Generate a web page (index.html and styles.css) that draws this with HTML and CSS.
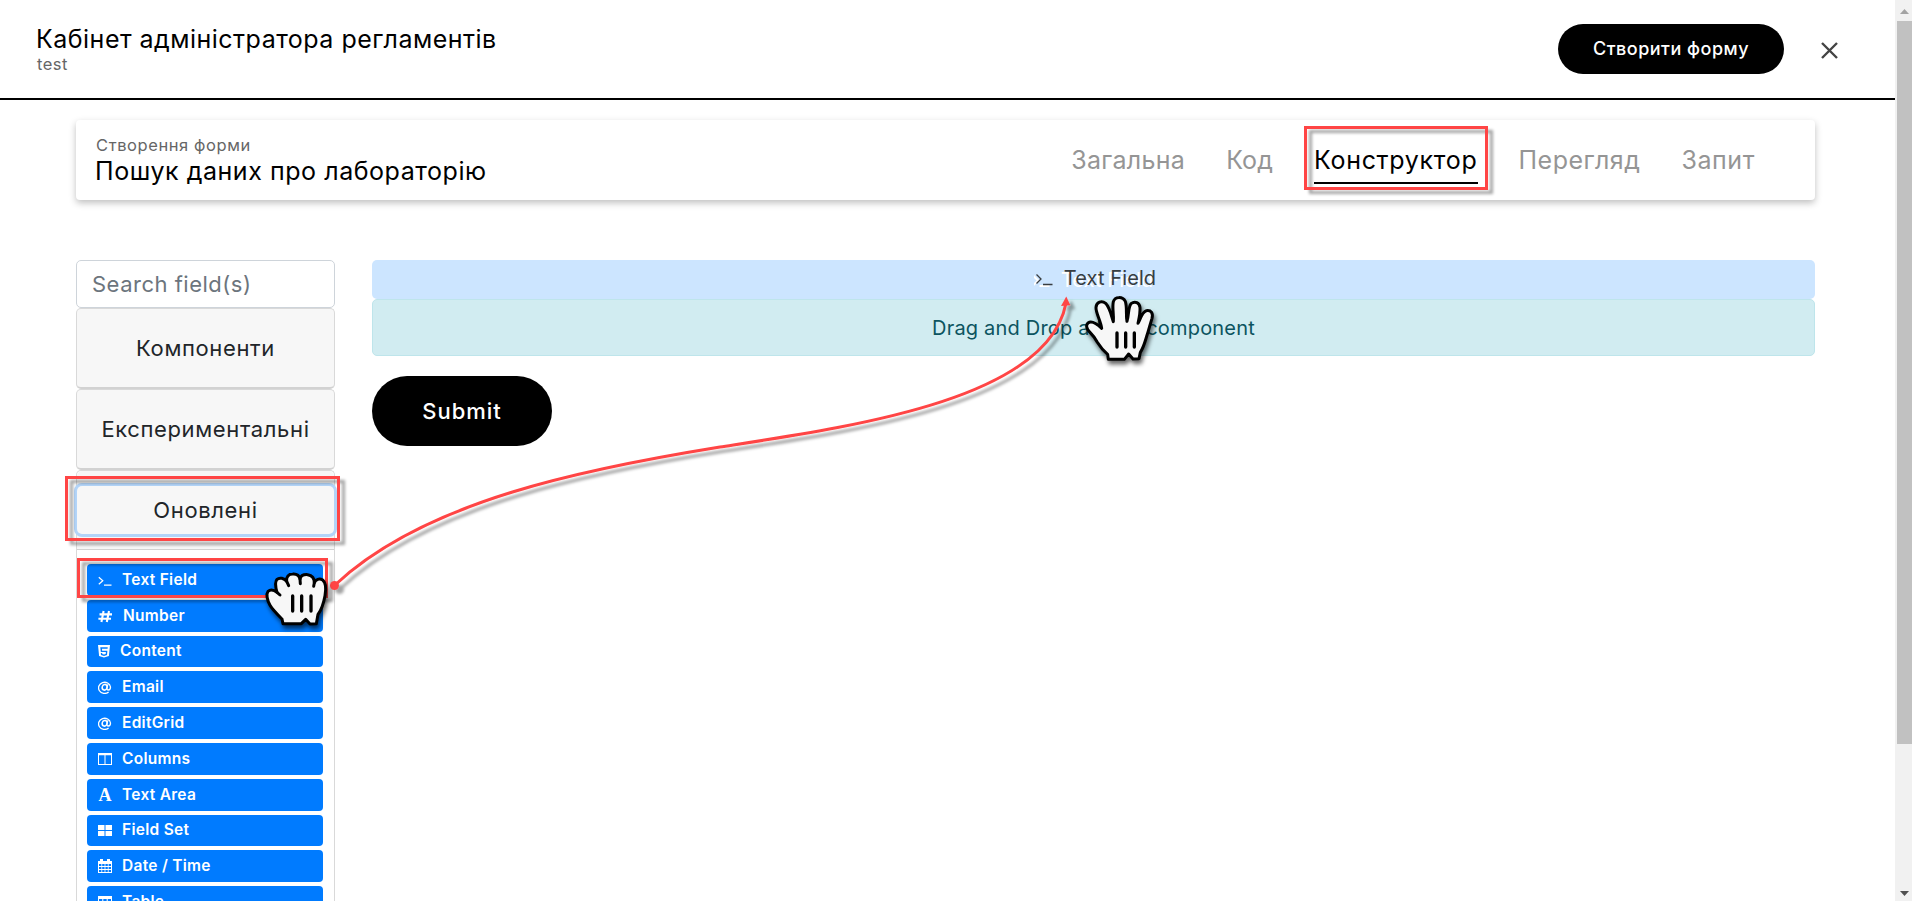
FILE: index.html
```
<!DOCTYPE html>
<html lang="uk">
<head>
<meta charset="utf-8">
<title>Кабінет адміністратора регламентів</title>
<link rel="stylesheet" href="styles.css">
</head>
<body>
<div class="window">
  <div class="page">
    <header class="top">
      <div class="top-titles">
        <div class="top-title">Кабінет адміністратора регламентів</div>
        <div class="top-user">test</div>
      </div>
      <button class="create">Створити форму</button>
      <svg class="close" width="17" height="17" viewBox="0 0 17 17"><path d="M1 1L16 16M16 1L1 16" stroke="#444" stroke-width="2.4"/></svg>
    </header>

    <section class="form-card">
      <div class="form-titles">
        <div class="form-sub">Створення форми</div>
        <div class="form-title">Пошук даних про лабораторію</div>
      </div>
      <nav class="tabs">
        <a class="tab t1">Загальна</a>
        <a class="tab t2">Код</a>
        <a class="tab t3 active">Конструктор</a>
        <a class="tab t4">Перегляд</a>
        <a class="tab t5">Запит</a>
      </nav>
    </section>

    <main class="builder">
      <aside class="sidebar">
        <input class="search" placeholder="Search field(s)">
        <div class="group"><button class="group-btn">Компоненти</button></div>
        <div class="group"><button class="group-btn">Експериментальні</button></div>
        <div class="group open">
          <div class="group-head"><button class="group-btn focus">Оновлені</button></div>
          <div class="items">
            <div class="item"><svg class="icon" viewBox="0 0 14 14"><path d="M.8 4.2L4.8 7.7L.8 11.2M6 12.2H13.5" fill="none" stroke="#fff" stroke-width="1.2"/></svg>Text Field</div>
            <div class="item wide"><svg class="icon" viewBox="0 0 14 14"><path d="M5.6 2L3.4 13M11 2L8.8 13M1.5 5.4H14M.4 9.7H13" fill="none" stroke="#fff" stroke-width="2.1"/></svg>Number</div>
            <div class="item narrow"><svg class="icon" viewBox="0 0 14 14"><path fill="#fff" fill-rule="evenodd" d="M0 1H12L10.9 12L6 13.6L1.1 12ZM2.3 3.3L2.8 8H7.9L7.7 10L6 10.5L4.3 10L4.2 9H2.8L3 11L6 12L9 11L9.4 6.7H4.1L4 4.8H9.6L9.7 3.3Z"/></svg>Content</div>
            <div class="item"><svg class="icon" viewBox="0 0 14 14"><g fill="none" stroke="#fff" stroke-width="1.3"><path d="M10.6 12A6 5.6 0 1 1 12.5 7C12.5 9.5 11.2 10 10.3 10C9.2 10 8.8 9.2 9 8.4L9.8 4.4"/><ellipse cx="6.6" cy="7.3" rx="2.4" ry="2.8" transform="rotate(15 6.6 7.3)" stroke-width="1.5"/></g></svg>Email</div>
            <div class="item"><svg class="icon" viewBox="0 0 14 14"><g fill="none" stroke="#fff" stroke-width="1.3"><path d="M10.6 12A6 5.6 0 1 1 12.5 7C12.5 9.5 11.2 10 10.3 10C9.2 10 8.8 9.2 9 8.4L9.8 4.4"/><ellipse cx="6.6" cy="7.3" rx="2.4" ry="2.8" transform="rotate(15 6.6 7.3)" stroke-width="1.5"/></g></svg>EditGrid</div>
            <div class="item"><svg class="icon" viewBox="0 0 14 14"><path fill="#fff" fill-rule="evenodd" d="M0 1H14V13H0ZM1 3.2V12H6.5V3.2ZM7.5 3.2V12H13V3.2Z"/></svg>Columns</div>
            <div class="item"><span class="icon letter">A</span>Text Area</div>
            <div class="item"><svg class="icon" viewBox="0 0 14 14"><path fill="#fff" d="M0 2H6.5V7H0ZM7.5 2H14V7H7.5ZM0 8H6.5V13H0ZM7.5 8H14V13H7.5Z"/></svg>Field Set</div>
            <div class="item"><svg class="icon" viewBox="0 0 14 14"><path fill="#fff" fill-rule="evenodd" d="M0 2H2V0H5V2H9V0H12V2H14V14H0ZM1 5V7H3.4V5ZM4.2 5V7H6.6V5ZM7.4 5V7H9.8V5ZM10.6 5V7H13V5ZM1 8V10H3.4V8ZM4.2 8V10H6.6V8ZM7.4 8V10H9.8V8ZM10.6 8V10H13V8ZM1 11V13H3.4V11ZM4.2 11V13H6.6V11ZM7.4 11V13H9.8V11ZM10.6 11V13H13V11Z"/></svg>Date / Time</div>
            <div class="item"><svg class="icon" viewBox="0 0 14 14"><path fill="#fff" fill-rule="evenodd" d="M0 1H14V13H0ZM1 4V6H4.3V4ZM5.3 4V6H8.7V4ZM9.7 4V6H13V4ZM1 7V9H4.3V7ZM5.3 7V9H8.7V7ZM9.7 7V9H13V7ZM1 10V12H4.3V10ZM5.3 10V12H8.7V10ZM9.7 10V12H13V10Z"/></svg>Table</div>
          </div>
        </div>
      </aside>
      <div class="canvas">
        <div class="dragged"><svg class="prompt" width="19" height="15" viewBox="0 0 19 15"><path d="M1 4L5.500 8.500L1 13M7 14H17" transform="translate(-1.500 0)" fill="none" stroke="#fff" stroke-width="2"/><path d="M2.500 2.500L7 7L2.500 11.500M9 12.500H18.500" fill="none" stroke="#383d41" stroke-width="1.300"/></svg><span>Text Field</span></div>
        <div class="drop">Drag and Drop a form component</div>
        <button class="submit">Submit</button>
      </div>
    </main>
  </div>
  <div class="scroll">
    <svg class="arrow" width="17" height="21" viewBox="0 0 17 21"><path d="M5 14L9.500 9L14 14Z" fill="#a3a3a3"/></svg>
    <div class="thumb"></div>
    <svg class="arrow" width="17" height="17" viewBox="0 0 17 17"><path d="M5 7L9.500 12L14 7Z" fill="#505050"/></svg>
  </div>
</div>

<svg class="notes" width="1912" height="901" viewBox="0 0 1912 901">
  <defs>
    <filter id="sh" x="-10%" y="-20%" width="130%" height="150%"><feDropShadow dx="5" dy="4" stdDeviation="1.8" flood-color="#000" flood-opacity=".36"/></filter>
    <filter id="hs" x="-20%" y="-20%" width="150%" height="150%"><feDropShadow dx="5" dy="11" stdDeviation="6" flood-color="#000" flood-opacity=".6"/></filter>
  </defs>
  <g fill="none" stroke="#ff4545" stroke-width="3">
    <rect x="1305.500" y="127.500" width="181" height="61" filter="url(#sh)"/>
    <rect x="66.500" y="477.500" width="272" height="62" filter="url(#sh)"/>
    <rect x="78.500" y="559.500" width="248" height="37" filter="url(#sh)"/>
  </g>
  <g filter="url(#sh)">
    <path d="M335 585C425 500 590 468 720 447C850 427 1048 400 1066 303" fill="none" stroke="#ff4545" stroke-width="3"/>
    <circle cx="334.500" cy="585.500" r="4.500" fill="#ff4545"/>
    <path d="M1066.300 296.500L1061 306L1070.300 305.300Z" fill="#ff4545"/>
  </g>
  <g transform="translate(250 550) scale(.33333)" filter="url(#hs)">
    <path d="M99 221L96 207C84 195 68 180 60 166C51 150 48 132 54 124C61 118 72 120 81 127C76 109 75 94 81 88C89 81 102 85 110 94C108 80 116 72 128 72C141 71 148 78 150 87C153 76 161 73 173 74C186 76 193 86 193 98C197 88 208 84 218 90C230 99 228 119 225 137C221 159 216 177 204 193L199 221L180 222L167 208L154 221Z" fill="#f7f7f7" stroke="#000" stroke-width="9" stroke-linejoin="round"/>
    <path d="M81 127L90 135M110 94L116 107M150 87L151 101M193 98L191 109" fill="none" stroke="#000" stroke-width="9" stroke-linecap="round"/>
    <path d="M128 138V183M155 138V183M183 138V183" stroke="#000" stroke-width="10" stroke-linecap="round"/>
  </g>
  <g transform="translate(1060 280) scale(.33333)" filter="url(#hs)">
    <path d="M145 238L143 223C132 214 120 200 112 187C105 174 99 166 88 155C79 145 77 135 84 129C94 122 108 129 125 145C123 124 107 99 108 82C109 66 125 60 137 70C150 84 154 108 160 125C162 103 156 83 160 65C165 49 188 49 196 64C202 83 197 105 201 124C207 107 204 81 213 71C225 62 239 68 240 83C241 101 237 116 234 130C242 116 246 95 259 92C274 90 280 100 276 115C270 134 266 151 260 169C255 185 251 202 241 217L237 236L219 237L206 222L193 238Z" fill="#f7f7f7" stroke="#000" stroke-width="9" stroke-linejoin="round"/>
    <path d="M171 159V201M197 159V201M223 159V201" stroke="#000" stroke-width="10" stroke-linecap="round"/>
  </g>
</svg>
</body>
</html>
```
FILE: styles.css
```
* { box-sizing: border-box; }
body { margin: 0; height: 901px; overflow: hidden; background: #fff; color: #000; font-family: Inter, "Noto Sans", sans-serif; }
button { font-family: inherit; border: 0; padding: 0; }
.window { display: flex; height: 901px; }
.page { width: 1895px; height: 901px; overflow: hidden; }

.top { display: flex; align-items: flex-start; height: 100px; padding: 24px 57px 0 37px; border-bottom: 2px solid #000; }
.top-titles { flex: 1; padding-top: 1px; }
.top-title { font-size: 25px; line-height: 29px; letter-spacing: .48px; margin-left: -1px; }
.top-user { font-size: 16.5px; line-height: 20px; letter-spacing: .5px; color: #666; }
.create { width: 226px; height: 50px; border-radius: 25px; background: #000; color: #fff; font-size: 18px; font-weight: 500; letter-spacing: .49px; margin-right: 37px; padding-bottom: 2px; }
.close { margin-top: 18px; }

.form-card { display: flex; justify-content: space-between; width: 1739px; height: 80px; margin: 20px 0 0 76px; padding: 15px 60px 0 20px; border-radius: 4px; box-shadow: 0 3px 7px rgba(0, 0, 0, .25); }
.form-sub { font-size: 16.5px; line-height: 21px; letter-spacing: .58px; color: #666; }
.form-title { font-size: 25px; line-height: 30px; letter-spacing: .55px; margin-left: -1px; }
.tabs { display: flex; gap: 41px; padding-top: 10px; }
.tab { font-size: 25px; line-height: 30px; height: 39px; color: #959595; white-space: nowrap; letter-spacing: .4px; }
.t1 { letter-spacing: .3px; }
.t2 { letter-spacing: .1px; }
.t3 { letter-spacing: .7px; }
.t4 { letter-spacing: .5px; }
.t5 { letter-spacing: .6px; }
.active { color: #000; border-bottom: 2px solid #000; }

.builder { display: flex; gap: 37px; margin: 60px 0 0 76px; }
.sidebar { width: 259px; }
.search { display: block; width: 259px; height: 48px; padding: 0 15px; border: 1px solid #ced4da; border-radius: 5px; font: 22px Inter, sans-serif; letter-spacing: .5px; }
.search::placeholder { color: #6c757d; opacity: 1; }
.group { height: 81px; border: 1px solid #d9d9d9; border-bottom: 2px solid #d2d2d2; border-radius: 5px; background: #f7f7f7; display: flex; align-items: center; justify-content: center; }
.group-btn { background: #f7f7f7; color: #212529; font-size: 22px; letter-spacing: .63px; }
.open { display: block; height: 500px; background: #fff; }
.group-head { height: 79px; background: #f7f7f7; border-bottom: 1px solid #d2d2d2; border-radius: 5px 5px 0 0; padding-top: 15px; }
.focus { width: 257px; height: 48px; border-radius: 5px; box-shadow: 0 0 0 3px #b3d4f8; }
.items { display: flex; flex-direction: column; gap: 4px; padding: 14px 11px 14px 10px; }
.item { display: flex; align-items: center; height: 31.8px; flex: none; padding: 0 0 1px 11px; border-radius: 4px; background: #007bff; color: #fff; font-size: 15.5px; font-weight: 600; letter-spacing: .28px; }
.icon { width: 14px; height: 14px; margin: 1px 10px 0 0; flex: none; }
.wide .icon { margin-right: 11px; }
.narrow .icon { margin-right: 8px; }
.letter { font: bold 18px/15px "Liberation Serif", serif; letter-spacing: 0; text-align: center; }

.canvas { width: 1443px; }
.dragged { display: flex; justify-content: center; align-items: center; height: 39px; padding: 0 0 4px 3px; background: #cce5ff; border-radius: 5px; color: #383d41; font-size: 20px; letter-spacing: .1px; text-shadow: -3px 2px 0 #fff; }
.prompt { margin: 4px 11px 0 0; }
.drop { height: 57px; line-height: 57px; text-align: center; background: #d1ecf1; border: 1px solid #bee5eb; border-radius: 5px; color: #0c5460; font-size: 20px; letter-spacing: .19px; }
.submit { display: block; width: 180px; height: 70px; margin-top: 20px; border-radius: 35px; background: #000; color: #fff; font-size: 22px; font-weight: 500; letter-spacing: 1px; }

.scroll { width: 17px; background: #f1f1f1; display: flex; flex-direction: column; }
.thumb { height: 723px; margin: 0 0 auto 2px; background: #c1c1c1; }
.arrow { flex: none; }
.notes { position: absolute; left: 0; top: 0; pointer-events: none; }
```
